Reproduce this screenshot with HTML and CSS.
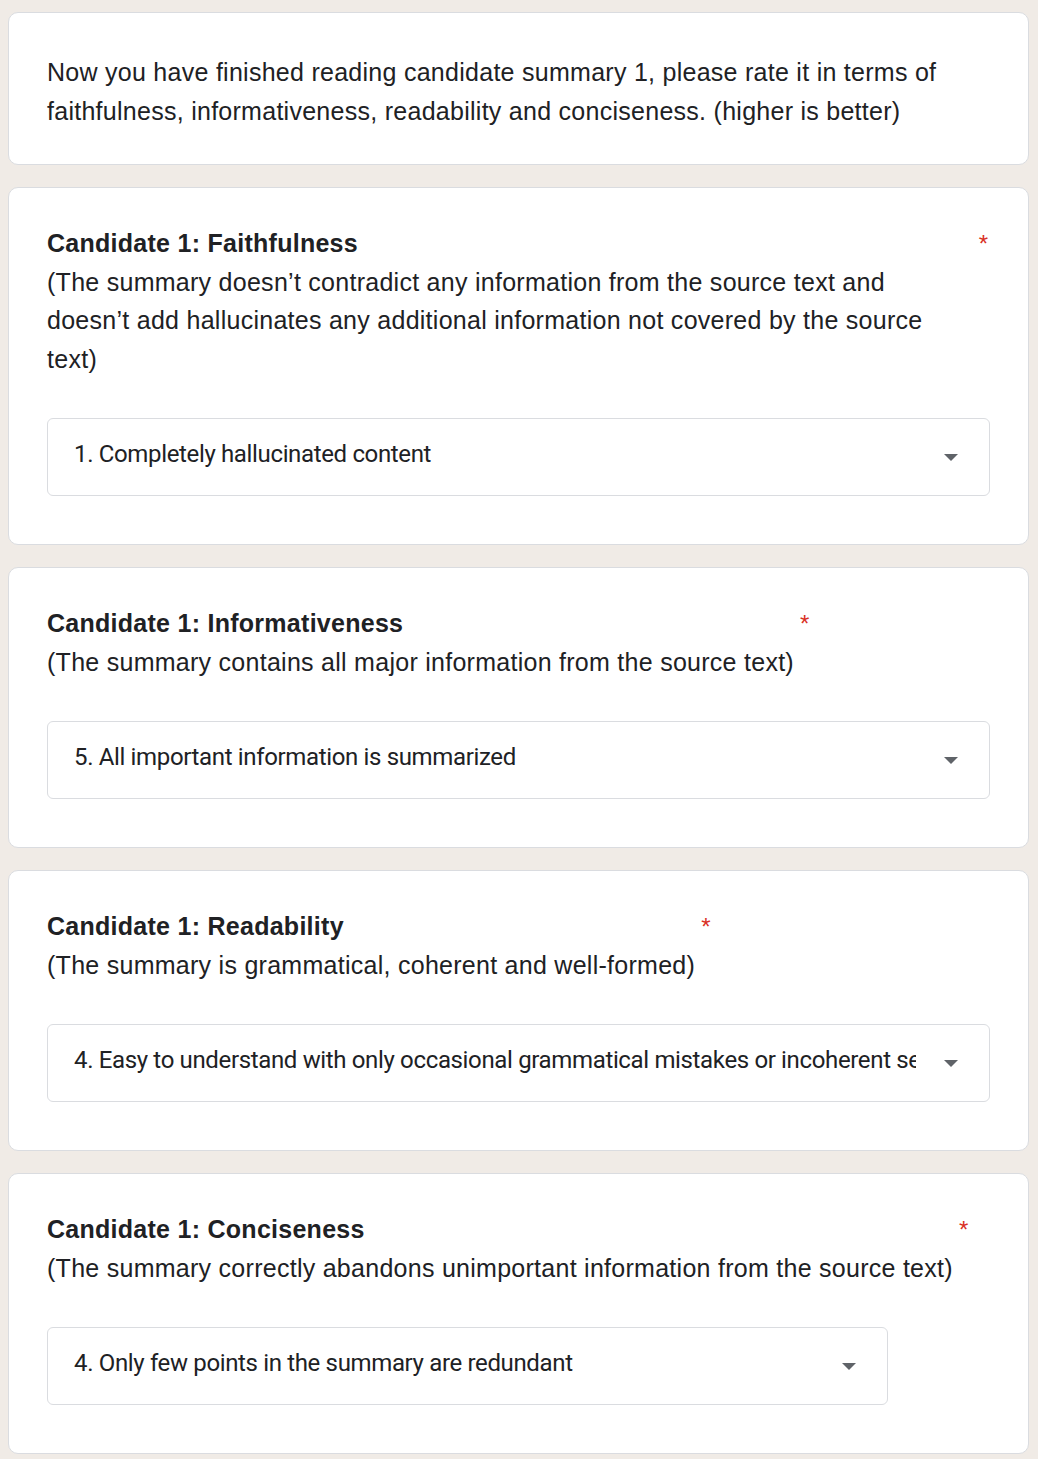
FILE: index.html
```html
<!DOCTYPE html>
<html>
<head>
<meta charset="utf-8">
<link rel="stylesheet" href="styles.css">
</head>
<body>
<div class="form">
  <div class="card intro">
    <p class="intro-text">Now you have finished reading candidate summary 1, please rate it in terms of faithfulness, informativeness, readability and conciseness. (higher is better)</p>
  </div>

  <div class="card">
    <div class="q-head">
      <div class="q-text">
        <div class="q-title">Candidate 1: Faithfulness</div>
        <div class="q-desc">(The summary doesn’t contradict any information from the source text and doesn’t add hallucinates any additional information not covered by the source text)</div>
      </div>
      <span class="req">*</span>
    </div>
    <div class="select">
      <span class="select-value">1. Completely hallucinated content</span>
      <span class="arrow"></span>
    </div>
  </div>

  <div class="card">
    <div class="q-head">
      <div class="q-text">
        <div class="q-title">Candidate 1: Informativeness</div>
        <div class="q-desc">(The summary contains all major information from the source text)</div>
      </div>
      <span class="req">*</span>
    </div>
    <div class="select">
      <span class="select-value">5. All important information is summarized</span>
      <span class="arrow"></span>
    </div>
  </div>

  <div class="card">
    <div class="q-head">
      <div class="q-text">
        <div class="q-title">Candidate 1: Readability</div>
        <div class="q-desc">(The summary is grammatical, coherent and well-formed)</div>
      </div>
      <span class="req">*</span>
    </div>
    <div class="select">
      <span class="select-value">4. Easy to understand with only occasional grammatical mistakes or incoherent sentences</span>
      <span class="arrow"></span>
    </div>
  </div>

  <div class="card last">
    <div class="q-head">
      <div class="q-text">
        <div class="q-title">Candidate 1: Conciseness</div>
        <div class="q-desc">(The summary correctly abandons unimportant information from the source text)</div>
      </div>
      <span class="req">*</span>
    </div>
    <div class="select narrow">
      <span class="select-value">4. Only few points in the summary are redundant</span>
      <span class="arrow"></span>
    </div>
  </div>
</div>
</body>
</html>
```
FILE: styles.css
```css
html, body {
  margin: 0;
  padding: 0;
  background: #f0ebe6;
}
body {
  font-family: "Liberation Sans", Arial, sans-serif;
  color: #202124;
}
.form {
  padding: 12px 9px 10px 8px;
  display: flex;
  flex-direction: column;
  gap: 22px;
}
.card {
  background: #fff;
  border: 1px solid #dadce0;
  border-radius: 10px;
  padding: 36px 38px 48px;
}
.card.intro {
  padding: 40px 38px 34px;
}
.intro-text {
  margin: 0;
  font-size: 25px;
  letter-spacing: 0.27px;
  line-height: 38.5px;
}
.q-head {
  display: flex;
  align-items: flex-start;
  gap: 6px;
  margin-bottom: 40px;
}
.q-text {
  flex: 0 1 auto;
  font-size: 25px;
  letter-spacing: 0.27px;
  line-height: 38.5px;
}
.q-title {
  font-weight: bold;
}
.req {
  color: #d93025;
  font-size: 24px;
  line-height: 24px;
  flex: none;
  margin-top: 8px;
  padding-right: 2px;
}
.select {
  display: flex;
  align-items: center;
  height: 78px;
  box-sizing: border-box;
  border: 1px solid #dadce0;
  border-radius: 6px;
  padding: 0 31px 0 26px;
}
.select.narrow {
  width: 841px;
}
.select-value {
  flex: 1 1 auto;
  min-width: 0;
  white-space: nowrap;
  overflow: hidden;
  font-family: Roboto, "Liberation Sans", sans-serif;
  font-size: 24px;
  letter-spacing: -0.35px;
  color: #202124;
  margin-top: -6px;
  margin-right: 28px;
}
.arrow {
  flex: none;
  width: 0;
  height: 0;
  border-left: 7px solid transparent;
  border-right: 7px solid transparent;
  border-top: 7px solid #5f6368;
}
```
